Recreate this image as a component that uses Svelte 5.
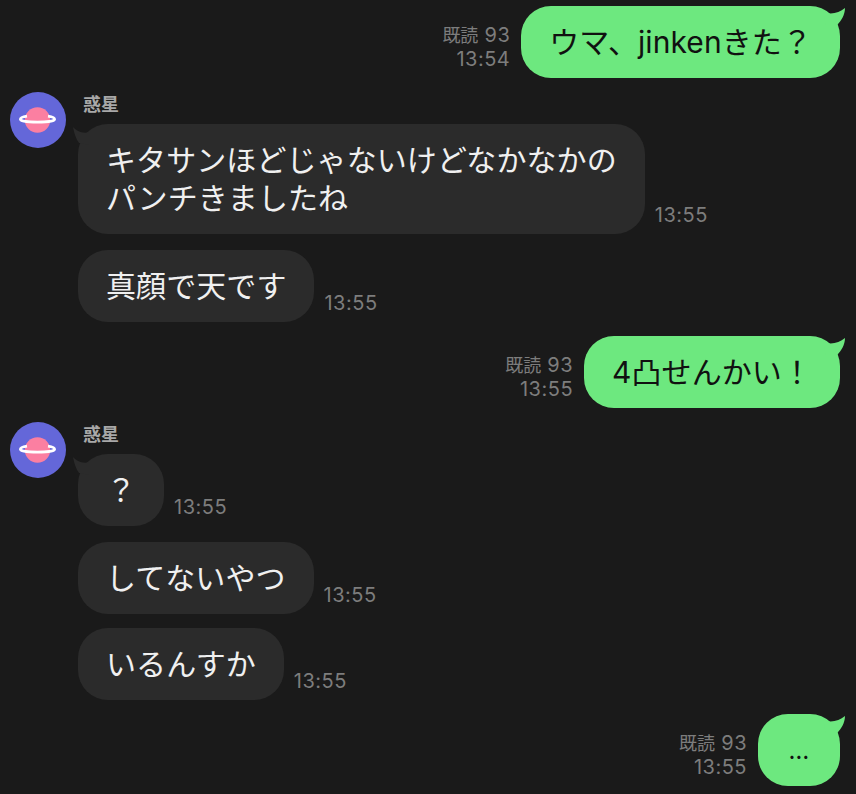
<script lang="ts">
	// Chat log: each entry is one group, outgoing single bubbles or an incoming
	// sender group with avatar and name.
	const log = [
		{ out: true, text: 'ウマ、jinkenきた？', time: '13:54' },
		{
			out: false,
			items: [
				{ text: 'キタサンほどじゃないけどなかなかの\nパンチきましたね', time: '13:55' },
				{ text: '真顔で天です', time: '13:55' }
			]
		},
		{ out: true, text: '4凸せんかい！', time: '13:55' },
		{
			out: false,
			items: [
				{ text: '？', time: '13:55' },
				{ text: 'してないやつ', time: '13:55' },
				{ text: 'いるんすか', time: '13:55' }
			]
		},
		{ out: true, text: '…', time: '13:55' }
	];
</script>

<main class="chat">
	{#each log as entry}
		{#if entry.out}
			<div class="row out">
				<div class="meta">
					<span><span class="read">既読</span> 93</span>
					<span>{entry.time}</span>
				</div>
				<div class="bubble green">
					{#if entry.text === '…'}
						<span class="dots">{entry.text}</span>
					{:else}
						{entry.text}
					{/if}
					<svg class="tail" width="20" height="20" viewBox="0 0 20 20" aria-hidden="true">
						<path d="M-3 5 C5 8 13 6 19 1 C19 8 15 14 11 18 L0 18 Z" fill="#6de87f" />
					</svg>
				</div>
			</div>
		{:else}
			<div class="group">
				<svg class="avatar" width="56" height="56" viewBox="0 0 56 56" aria-hidden="true">
					<circle cx="28" cy="28" r="28" fill="#6467d9" />
					<circle cx="27.5" cy="28" r="12.7" fill="#fb7fa1" />
					<path d="M17 24.2 C13 24.8 10.4 25.9 10.4 27.2 C10.4 29 18 30.2 27.5 30.2 C37 30.2 44.6 29 44.6 27.2 C44.6 25.9 42 24.8 38 24.2" fill="none" stroke="#fff" stroke-width="2.8" />
				</svg>
				<div class="body">
					<div class="name">惑星</div>
					<div class="stack">
						{#each entry.items as item, i}
							<div class="row">
								<div class="bubble dark">
									{item.text}
									{#if i === 0}
										<svg class="tail" width="20" height="20" viewBox="0 0 20 20" aria-hidden="true">
											<path d="M1 0 C5 4 10 7 18 5 L18 18 L7 16 C4 12 2 6 1 0 Z" fill="#2b2b2b" />
										</svg>
									{/if}
								</div>
								<div class="meta"><span>{item.time}</span></div>
							</div>
						{/each}
					</div>
				</div>
			</div>
		{/if}
	{/each}
</main>

<style>
	:global(body) {
		margin: 0;
		background: #1a1a1a;
	}
	.chat {
		display: flex;
		flex-direction: column;
		gap: 14px;
		height: 794px;
		box-sizing: border-box;
		padding: 6px 16px 0 10px;
		overflow: hidden;
		font-family: Inter, 'Noto Sans CJK JP', sans-serif;
	}
	.group {
		display: flex;
		gap: 12px;
		align-items: flex-start;
	}
	.avatar {
		flex: none;
		display: block;
	}
	.name {
		height: 32px;
		font-size: 18px;
		font-weight: 600;
		line-height: 26px;
		color: #a8a8a8;
		padding-left: 5px;
	}
	.stack {
		display: flex;
		flex-direction: column;
		gap: 16px;
	}
	.stack .row:nth-child(3) {
		margin-top: -2px;
	}
	.row {
		display: flex;
		align-items: flex-end;
		gap: 10px;
	}
	.row.out {
		justify-content: flex-end;
		gap: 11px;
	}
	.bubble {
		position: relative;
		padding: 17px 28px;
		border-radius: 30px;
		font-size: 30px;
		letter-spacing: 0.08px;
		line-height: 38px;
		white-space: pre-line;
	}
	.green {
		background: #6de87f;
		color: #111;
	}
	.dark {
		background: #2b2b2b;
		color: #f0f0f0;
	}
	.dots {
		display: block;
		width: 26px;
		height: 38px;
		text-align: center;
		font-size: 24px;
		line-height: 40px;
	}
	.tail {
		position: absolute;
		overflow: visible;
	}
	.green .tail {
		right: -6px;
		top: 1px;
	}
	.dark .tail {
		left: -6px;
		top: 3px;
	}
	.meta {
		display: flex;
		flex-direction: column;
		align-items: flex-end;
		padding-bottom: 7px;
		font-size: 20px;
		letter-spacing: 0.5px;
		line-height: 24px;
		color: #7d7d7d;
	}
	.meta > span + span {
		margin-top: -1px;
	}
	.read {
		font-size: 18px;
		letter-spacing: 0;
	}
</style>
